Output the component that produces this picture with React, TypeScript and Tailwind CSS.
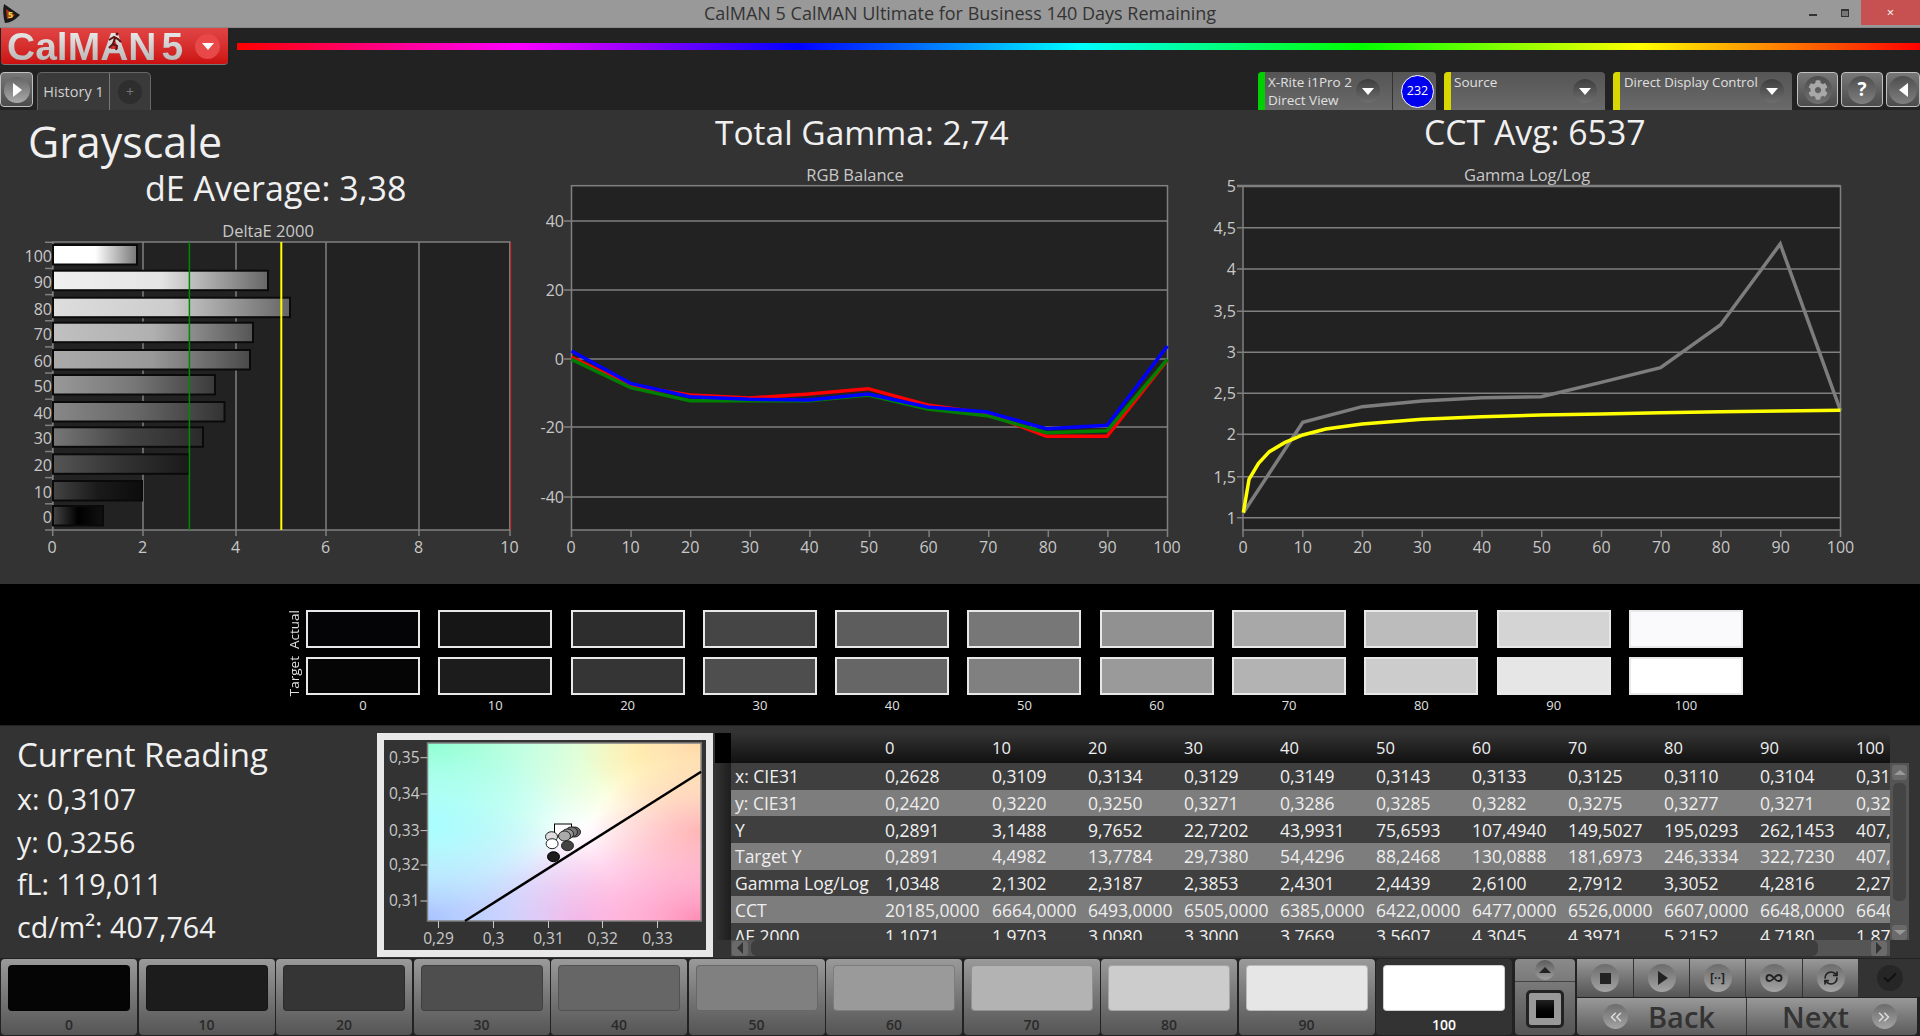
import { ChevronsLeft, ChevronsRight, Check, Infinity as InfinityIcon, RefreshCw } from "lucide-react";
import { FaCog } from "react-icons/fa";

const levels = [0, 10, 20, 30, 40, 50, 60, 70, 80, 90, 100];
const actual = ["#040406", "#161616", "#2e2d2e", "#454545", "#5e5d5d", "#777777", "#919191", "#a8a8a8", "#bcbcbc", "#d4d4d4", "#fafafc"];
const target = ["#050505", "#1c1c1c", "#353535", "#4e4e4e", "#666666", "#808080", "#9a9a9a", "#b3b3b3", "#cccccc", "#e6e6e6", "#ffffff"];

const rows = [
  ["x: CIE31", "0,2628", "0,3109", "0,3134", "0,3129", "0,3149", "0,3143", "0,3133", "0,3125", "0,3110", "0,3104", "0,3107"],
  ["y: CIE31", "0,2420", "0,3220", "0,3250", "0,3271", "0,3286", "0,3285", "0,3282", "0,3275", "0,3277", "0,3271", "0,3256"],
  ["Y", "0,2891", "3,1488", "9,7652", "22,7202", "43,9931", "75,6593", "107,4940", "149,5027", "195,0293", "262,1453", "407,7640"],
  ["Target Y", "0,2891", "4,4982", "13,7784", "29,7380", "54,4296", "88,2468", "130,0888", "181,6973", "246,3334", "322,7230", "407,7640"],
  ["Gamma Log/Log", "1,0348", "2,1302", "2,3187", "2,3853", "2,4301", "2,4439", "2,6100", "2,7912", "3,3052", "4,2816", "2,2790"],
  ["CCT", "20185,0000", "6664,0000", "6493,0000", "6505,0000", "6385,0000", "6422,0000", "6477,0000", "6526,0000", "6607,0000", "6648,0000", "6640,0000"],
  ["ΔE 2000", "1,1071", "1,9703", "3,0080", "3,3000", "3,7669", "3,5607", "4,3045", "4,3971", "5,2152", "4,7180", "1,8760"],
];

// delta bars, top to bottom
const bars = [
  { label: "100", y: 245, end: 137, stops: ["#ffffff", "#ffffff", "#777777"] },
  { label: "90", y: 270.7, end: 268, stops: ["#f0f0f0", "#e4e4e4", "#666666"] },
  { label: "80", y: 297.7, end: 290, stops: ["#dddddd", "#cccccc", "#666666"] },
  { label: "70", y: 322.7, end: 253, stops: ["#c0c0c0", "#b0b0b0", "#555555"] },
  { label: "60", y: 350, end: 250, stops: ["#aaaaaa", "#999999", "#4a4a4a"] },
  { label: "50", y: 375, end: 215, stops: ["#999999", "#777777", "#3a3a3a"] },
  { label: "40", y: 402, end: 224.5, stops: ["#888888", "#666666", "#333333"] },
  { label: "30", y: 427.3, end: 203, stops: ["#777777", "#444444", "#2a2a2a"] },
  { label: "20", y: 454.3, end: 189, stops: ["#555555", "#333333", "#1a1a1a"] },
  { label: "10", y: 481, end: 142, stops: ["#444444", "#1a1a1a", "#0c0c0c"] },
  { label: "0", y: 506, end: 103, stops: ["#444444", "#000000", "#111111"] },
];

const axisText = "#c8c8c8";
const gridLine = "#808080";

const toPoints = (points: number[][], ox: number, sx: number) =>
  points.map(([x, y]) => `${ox + x / sx},${160 + y / 3}`).join(" ");

function DeltaChart() {
  const gridX = [52.7, 143, 236, 326, 419, 510];
  return (
    <svg width={530} height={375} viewBox="0 209 530 375">
      <defs>
        {bars.map((b) => (
          <linearGradient key={b.label} id={`bar${b.label}`} x1="0" x2="1" y1="0" y2="0">
            <stop offset="0" stopColor={b.stops[0]} />
            <stop offset="0.5" stopColor={b.stops[1]} />
            <stop offset="1" stopColor={b.stops[2]} />
          </linearGradient>
        ))}
      </defs>
      <text x={268} y={236.5} textAnchor="middle" fontSize={16.5} fill={axisText}>DeltaE 2000</text>
      <rect x={52.7} y={242} width={457.3} height={288} fill="#222222" stroke={gridLine} strokeWidth={1.5} />
      {gridX.map((x) => (
        <line key={x} x1={x} x2={x} y1={242} y2={536} stroke={gridLine} strokeWidth={1.5} />
      ))}
      {bars.map((b, i) => (
        <g key={b.label}>
          <line x1={45} x2={52.7} y1={242.3 + i * 26.15} y2={242.3 + i * 26.15} stroke={gridLine} strokeWidth={1.5} />
          <rect x={53} y={b.y} width={b.end - 53} height={19.5} fill={`url(#bar${b.label})`} stroke="#0a0a0a" strokeWidth={2} />
          <text x={52} y={b.y + 17} textAnchor="end" fontSize={16} fill={axisText}>{b.label}</text>
        </g>
      ))}
      <line x1={45} x2={52.7} y1={530} y2={530} stroke={gridLine} strokeWidth={1.5} />
      <line x1={189.4} x2={189.4} y1={242} y2={530} stroke="#008a00" strokeWidth={1.5} />
      <line x1={281.3} x2={281.3} y1={242} y2={530} stroke="#ffff00" strokeWidth={2} />
      <line x1={510.7} x2={510.7} y1={242} y2={530} stroke="#c02020" strokeWidth={1} />
      {["0", "2", "4", "6", "8", "10"].map((t, i) => (
        <text key={t} x={gridX[i] - 0.5} y={553} textAnchor="middle" fontSize={16} fill={axisText}>{t}</text>
      ))}
    </svg>
  );
}

function RgbChart() {
  const red = [[97, 592], [233, 677], [370, 705], [507, 714], [644, 702], [781, 686], [918, 735], [1055, 760], [1192, 829], [1332, 829], [1471, 600]];
  const green = [[97, 598], [233, 683], [370, 722], [507, 722], [644, 722], [781, 705], [918, 747], [1055, 767], [1192, 818], [1332, 812], [1471, 598]];
  const blue = [[97, 573], [233, 670], [370, 710], [507, 718], [644, 720], [781, 702], [918, 741], [1055, 756], [1192, 806], [1332, 796], [1471, 558]];
  const hLines: [string, number][] = [["40", 221], ["20", 290], ["0", 359], ["-20", 427], ["-40", 497]];
  return (
    <svg width={670} height={428} viewBox="530 156 670 428">
      <text x={855} y={181} textAnchor="middle" fontSize={16.5} fill={axisText}>RGB Balance</text>
      <rect x={571.5} y={185.7} width={596} height={344.3} fill="#222222" stroke={gridLine} strokeWidth={1.5} />
      {hLines.map(([t, y]) => (
        <g key={t}>
          <line x1={564} x2={1167.5} y1={y} y2={y} stroke={gridLine} strokeWidth={1.5} />
          <text x={564} y={y + 6} textAnchor="end" fontSize={16} fill={axisText}>{t}</text>
        </g>
      ))}
      {levels.map((l, i) => (
        <g key={l}>
          <line x1={571.5 + i * 59.6} x2={571.5 + i * 59.6} y1={530} y2={537} stroke={gridLine} strokeWidth={1.5} />
          <text x={571 + i * 59.6} y={553} textAnchor="middle" fontSize={16} fill={axisText}>{l}</text>
        </g>
      ))}
      <polyline points={toPoints(red, 529.5, 2.306)} fill="none" stroke="#ff0000" strokeWidth={3.5} />
      <polyline points={toPoints(green, 529.5, 2.306)} fill="none" stroke="#008000" strokeWidth={3.5} />
      <polyline points={toPoints(blue, 529.5, 2.306)} fill="none" stroke="#0000ff" strokeWidth={3.5} />
    </svg>
  );
}

function GammaChart() {
  const gray = [[100, 1058], [237, 787], [374, 740], [512, 723], [650, 713], [787, 710], [925, 667], [1062, 623], [1200, 495], [1338, 252], [1477, 752]];
  const yellow = [[100, 1058], [113, 958], [135, 910], [160, 875], [195, 848], [237, 825], [290, 807], [374, 792], [512, 778], [650, 770], [787, 765], [925, 762], [1062, 758], [1200, 755], [1338, 753], [1477, 751]];
  const hLines: [string, number][] = [["5", 186], ["4,5", 227.7], ["4", 269], ["3,5", 311.3], ["3", 352.3], ["2,5", 393.3], ["2", 434.3], ["1,5", 476.7], ["1", 517.7]];
  return (
    <svg width={720} height={428} viewBox="1200 156 720 428">
      <text x={1527} y={181} textAnchor="middle" fontSize={16.5} fill={axisText}>Gamma Log/Log</text>
      <rect x={1243} y={186} width={597.5} height={344} fill="#222222" stroke={gridLine} strokeWidth={1.5} />
      {hLines.map(([t, y]) => (
        <g key={t}>
          <line x1={1237} x2={1840.5} y1={y} y2={y} stroke={gridLine} strokeWidth={t === "5" ? 2.5 : 1.5} />
          <text x={1236} y={y + 6} textAnchor="end" fontSize={16} fill={axisText}>{t}</text>
        </g>
      ))}
      {levels.map((l, i) => (
        <g key={l}>
          <line x1={1243 + i * 59.75} x2={1243 + i * 59.75} y1={530} y2={537} stroke={gridLine} strokeWidth={1.5} />
          <text x={1243 + i * 59.75} y={553} textAnchor="middle" fontSize={16} fill={axisText}>{l}</text>
        </g>
      ))}
      <polyline points={toPoints(gray, 1200, 2.306)} fill="none" stroke="#7d7d7d" strokeWidth={3.5} />
      <polyline points={toPoints(yellow, 1200, 2.306)} fill="none" stroke="#ffff00" strokeWidth={3.5} />
    </svg>
  );
}

function CieChart() {
  const yTicks: [string, number][] = [["0,35", 757.7], ["0,34", 794], ["0,33", 830.6], ["0,32", 865], ["0,31", 901]];
  const xTicks: [string, number][] = [["0,29", 439], ["0,3", 494], ["0,31", 549], ["0,32", 603], ["0,33", 658]];
  return (
    <svg width={322} height={209} viewBox="384.5 740 322 209">
      <defs>
        <radialGradient id="cieTL" cx="0" cy="0" r="0.75">
          <stop offset="0" stopColor="#8cffcc" />
          <stop offset="1" stopColor="#8cffcc" stopOpacity="0" />
        </radialGradient>
        <radialGradient id="cieTR" cx="1" cy="0" r="0.45">
          <stop offset="0" stopColor="#ffd8a8" />
          <stop offset="1" stopColor="#ffd8a8" stopOpacity="0" />
        </radialGradient>
        <radialGradient id="cieY" cx="0.78" cy="0.05" r="0.45">
          <stop offset="0" stopColor="#ffffb8" />
          <stop offset="1" stopColor="#ffffb8" stopOpacity="0" />
        </radialGradient>
        <radialGradient id="cieBL" cx="0" cy="1" r="0.7">
          <stop offset="0" stopColor="#a8c4ff" />
          <stop offset="1" stopColor="#a8c4ff" stopOpacity="0" />
        </radialGradient>
        <radialGradient id="cieBR" cx="1" cy="1" r="0.7">
          <stop offset="0" stopColor="#ff8cb4" />
          <stop offset="1" stopColor="#ffb0e0" stopOpacity="0" />
        </radialGradient>
        <radialGradient id="cieB" cx="0.55" cy="1" r="0.45">
          <stop offset="0" stopColor="#ffc4f4" />
          <stop offset="1" stopColor="#ffc4f4" stopOpacity="0" />
        </radialGradient>
        <radialGradient id="cieR" cx="1" cy="0.5" r="0.4">
          <stop offset="0" stopColor="#ffbca8" />
          <stop offset="1" stopColor="#ffbca8" stopOpacity="0" />
        </radialGradient>
        <radialGradient id="cieL" cx="0" cy="0.45" r="0.5">
          <stop offset="0" stopColor="#a8ffff" />
          <stop offset="1" stopColor="#a8ffff" stopOpacity="0" />
        </radialGradient>
      </defs>
      <rect x={428} y={743} width={273.6} height={178} fill="#ffffff" />
      {["cieY", "cieTL", "cieTR", "cieR", "cieB", "cieBL", "cieBR", "cieL"].map((id) => (
        <rect key={id} x={428} y={743} width={273.6} height={178} fill={`url(#${id})`} />
      ))}
      <rect x={428} y={743} width={273.6} height={178} fill="none" stroke="#808080" strokeWidth={1.5} />
      {yTicks.map(([t, y]) => (
        <g key={t}>
          <line x1={421} x2={428} y1={y} y2={y} stroke="#c8c8c8" />
          <text x={420} y={y + 5} textAnchor="end" fontSize={15.5} fill={axisText}>{t}</text>
        </g>
      ))}
      {xTicks.map(([t, x]) => (
        <g key={t}>
          <line x1={x} x2={x} y1={921} y2={928} stroke="#c8c8c8" />
          <text x={x} y={944} textAnchor="middle" fontSize={15.5} fill={axisText}>{t}</text>
        </g>
      ))}
      <line x1={465.5} y1={921} x2={701.6} y2={771.7} stroke="#000000" strokeWidth={2.5} />
      <rect x={555} y={824} width={17} height={12} fill="#ffffff" stroke="#000000" strokeWidth={1} />
      <ellipse cx={575} cy={832} rx={6} ry={5} fill="#666666" stroke="#222222" />
      <ellipse cx={572} cy={832} rx={6} ry={5} fill="#777777" stroke="#222222" />
      <ellipse cx={568} cy={834} rx={6} ry={5} fill="#999999" stroke="#222222" />
      <ellipse cx={565} cy={836} rx={6} ry={5} fill="#aaaaaa" stroke="#222222" />
      <ellipse cx={568} cy={845.7} rx={6} ry={5} fill="#444444" stroke="#222222" />
      <ellipse cx={552} cy={836.7} rx={6} ry={5} fill="#dddddd" stroke="#222222" />
      <ellipse cx={552.6} cy={843.7} rx={6} ry={5} fill="#ffffff" stroke="#222222" />
      <ellipse cx={554} cy={856.7} rx={6} ry={5} fill="#1c1c1c" stroke="#000000" />
    </svg>
  );
}

function RoundIcon({
  size = "w-[24px] h-[24px]",
  tone = "from-[#5c5c5c] to-[#a0a0a0]",
  children,
}: {
  size?: string;
  tone?: string;
  children: React.ReactNode;
}) {
  return (
    <div className={`${size} ${tone} rounded-full bg-gradient-to-b flex items-center justify-center shrink-0`}>
      {children}
    </div>
  );
}

function DownArrow() {
  return <div className="w-0 h-0 border-l-[6px] border-r-[6px] border-t-[7px] border-l-transparent border-r-transparent border-t-white" />;
}

function PillArrow() {
  return (
    <RoundIcon tone="from-[#3e3e3e] to-[#6e6e6e]">
      <DownArrow />
    </RoundIcon>
  );
}

function SourcePill({ width, strip, children }: { width: string; strip: string; children: React.ReactNode }) {
  return (
    <div className={`${width} h-[38px] flex rounded-t-[4px] overflow-hidden bg-gradient-to-b from-[#555555] to-[#6a6a6a] shrink-0`}>
      <div className={`w-[7px] ${strip}`} />
      {children}
    </div>
  );
}

function ToolButton({ width, children }: { width: string; children: React.ReactNode }) {
  return (
    <div className={`${width} h-[35px] rounded-[4px] border border-[#c0c0c0] bg-gradient-to-b from-[#777777] to-[#4c4c4c] flex items-center justify-center shrink-0`}>
      {children}
    </div>
  );
}

function TopButton({ width, children }: { width: string; children: React.ReactNode }) {
  return (
    <div className={`${width} h-[38px] border-r border-[#333333] bg-gradient-to-b from-[#999999] to-[#555555] flex items-center justify-center shrink-0`}>
      <RoundIcon size="w-[28px] h-[28px]" tone="from-[#6c6c6c] to-[#a4a4a4]">{children}</RoundIcon>
    </div>
  );
}

const logoText =
  "font-['Liberation_Sans',sans-serif] font-bold text-[39px] leading-none bg-gradient-to-b from-[#f0f0f0] to-[#b0b0b0] bg-clip-text text-transparent";

export default function App() {
  return (
    <div className="w-[1920px] h-[1036px] overflow-hidden flex flex-col bg-[#222222] font-['Open_Sans',sans-serif]">
      {/* title bar */}
      <div className="relative h-[28px] bg-[#999999] border-b border-[#888888] flex items-center justify-center shrink-0">
        <svg className="absolute left-[2px] top-[3px]" width={19} height={21} viewBox="0 0 19 21">
          <path d="M2 1 L18 12 Q10 20 3 20 Q0 10 2 1 Z" fill="#1a1a1a" />
          <path d="M4 6 L13 12 Q9 16 5 16 Z" fill="#b03018" />
          <text x={6} y={15} fontSize={9} fontWeight={700} fill="#d8e040">5</text>
        </svg>
        <span className="text-[18px] text-[#333333] pb-[1px]">CalMAN 5 CalMAN Ultimate for Business 140 Days Remaining</span>
        <div className="absolute right-0 top-0 flex items-center h-[25px]">
          <div className="w-[8px] h-[2px] bg-[#333333] mr-[24px] mt-[4px]" />
          <div className="w-[8px] h-[8px] border border-[#333333] border-t-[2px] mr-[12px] bg-[#777777]" />
          <div className="w-[59px] h-[25px] bg-[#c75050] text-white text-[13px] flex items-center justify-center">×</div>
        </div>
      </div>

      {/* logo and rainbow */}
      <div className="h-[44px] flex shrink-0">
        <div className="relative ml-[1px] w-[227px] h-[37px] rounded-b-[4px] border-b border-[#777777] bg-gradient-to-b from-[#e04444] to-[#cc0f0f] flex items-center pl-[6px] shrink-0">
          <span className={logoText}>CalMAN</span>
          <span className={`ml-[5px] ${logoText}`}>5</span>
          <svg className="absolute left-[104px] top-[3px]" width={20} height={20} viewBox="0 0 20 20" fill="none" stroke="#5a1414" strokeWidth={2}>
            <circle cx={12} cy={3} r={1.5} fill="#5a1414" stroke="none" />
            <path d="M4 9 L9 6 L13 8 L16 11 M10 7 L8 13 L12 15 L11 19 M8 13 L4 17" />
          </svg>
          <div className="ml-[12px] w-[25px] h-[25px] rounded-full bg-[#e84848] flex items-center justify-center">
            <DownArrow />
          </div>
        </div>
        <div className="flex-1 ml-[9px] mt-[15px] h-[7px] bg-[linear-gradient(to_right,#ff0000,#ff00ff,#0000ff,#00ffff,#00ff00,#ffff00,#ff0000)]" />
      </div>

      {/* tab row */}
      <div className="h-[38px] flex items-start shrink-0">
        <ToolButton width="w-[33px]">
          <RoundIcon size="w-[26px] h-[26px]" tone="from-[#666666] to-[#aaaaaa]">
            <div className="ml-[2px] w-0 h-0 border-t-[7px] border-b-[7px] border-l-[9px] border-t-transparent border-b-transparent border-l-white" />
          </RoundIcon>
        </ToolButton>
        <div className="ml-[4px] w-[114px] h-[38px] flex rounded-t-[5px] border-t border-l border-r border-[#666666] bg-[#3a3a3a]">
          <div className="w-[72px] border-r border-[#777777] flex items-center justify-center text-[14.5px] text-[#d0d0d0]">History 1</div>
          <div className="flex-1 flex items-center justify-center">
            <div className="w-[24px] h-[24px] rounded-full bg-[#2e2e2e] text-[#777777] text-[14px] flex items-center justify-center">+</div>
          </div>
        </div>
        <div className="flex-1" />
        <SourcePill width="w-[178px]" strip="bg-[#00d000]">
          <div className="w-[91px] pl-[3px] text-[13.5px] leading-[18px] text-[#e0e0e0] pt-[1px] whitespace-nowrap">
            <div>X-Rite i1Pro 2</div>
            <div>Direct View</div>
          </div>
          <div className="w-[26px] flex items-center"><PillArrow /></div>
          <div className="ml-[10px] pl-[6px] border-l border-[#333333] flex-1 flex items-center justify-center">
            <div className="w-[33px] h-[33px] rounded-full bg-[#0000ee] border border-white text-white text-[12.5px] flex items-center justify-center">232</div>
          </div>
        </SourcePill>
        <div className="w-[8px]" />
        <SourcePill width="w-[161px]" strip="bg-[#d8d800]">
          <div className="flex-1 pl-[3px] pt-[1px] text-[13.5px] leading-[18px] text-[#e0e0e0]">Source</div>
          <div className="w-[32px] flex items-center"><PillArrow /></div>
        </SourcePill>
        <div className="w-[8px]" />
        <SourcePill width="w-[179px]" strip="bg-[#d8d800]">
          <div className="flex-1 pl-[4px] pt-[1px] text-[13.2px] leading-[18px] text-[#e0e0e0] whitespace-nowrap">Direct Display Control</div>
          <div className="w-[32px] flex items-center"><PillArrow /></div>
        </SourcePill>
        <div className="w-[5px]" />
        <ToolButton width="w-[41px]">
          <RoundIcon size="w-[28px] h-[28px]" tone="from-[#4e4e4e] to-[#707070]"><FaCog size={20} color="#a8a8a8" /></RoundIcon>
        </ToolButton>
        <div className="w-[3px]" />
        <ToolButton width="w-[42px]">
          <RoundIcon size="w-[28px] h-[28px]" tone="from-[#4e4e4e] to-[#808080]"><span className="text-white font-bold text-[19px] leading-none">?</span></RoundIcon>
        </ToolButton>
        <div className="w-[3px]" />
        <ToolButton width="w-[34px]">
          <RoundIcon size="w-[28px] h-[28px]" tone="from-[#4e4e4e] to-[#808080]">
            <div className="w-0 h-0 border-t-[7px] border-b-[7px] border-r-[9px] border-t-transparent border-b-transparent border-r-white" />
          </RoundIcon>
        </ToolButton>
      </div>

      {/* charts */}
      <div className="h-[474px] bg-[#333333] flex shrink-0 text-[#f0f0f0]">
        <div className="w-[530px] shrink-0">
          <div className="pl-[28px] pt-[8px] h-[57px] text-[43px] leading-[48px]">Grayscale</div>
          <div className="pl-[145px] h-[42px] text-[34px] leading-[42px]">dE Average: 3,38</div>
          <DeltaChart />
        </div>
        <div className="w-[670px] shrink-0">
          <div className="h-[46px] pl-[185px] text-[33.5px] leading-[44px] whitespace-nowrap">Total Gamma: 2,74</div>
          <RgbChart />
        </div>
        <div className="w-[720px] shrink-0">
          <div className="h-[46px] pl-[224px] text-[33.8px] leading-[44px] whitespace-nowrap">CCT Avg: 6537</div>
          <GammaChart />
        </div>
      </div>

      {/* swatches */}
      <div className="h-[141px] bg-black flex shrink-0 pl-[284px] pt-[26px]">
        <div className="w-[22px] flex flex-col text-[13.5px] text-[#e0e0e0]">
          <div className="h-[38px] flex justify-center items-center"><span className="[writing-mode:vertical-rl] rotate-180 leading-none">Actual</span></div>
          <div className="h-[38px] mt-[9px] flex justify-center items-center"><span className="[writing-mode:vertical-rl] rotate-180 leading-none">Target</span></div>
        </div>
        <div className="flex gap-[18.3px]">
          {levels.map((l, i) => (
            <div key={l} className="w-[114px] flex flex-col">
              <div className="h-[38px] border-2 border-[#e8e8e8]" style={{ backgroundColor: actual[i] }} />
              <div className="h-[38px] mt-[9px] border-2 border-[#e8e8e8]" style={{ backgroundColor: target[i] }} />
              <div className="mt-[1px] text-center text-[13px] leading-[18px] text-[#e0e0e0]">{l}</div>
            </div>
          ))}
        </div>
      </div>

      {/* readings */}
      <div className="h-[233px] bg-[#333333] border-t border-[#222222] flex shrink-0 text-[#f0f0f0]">
        <div className="w-[377px] pl-[17px] pt-[7px] shrink-0">
          <div className="text-[33px] leading-[44px]">Current Reading</div>
          <div className="text-[28.6px] leading-[42.6px] mt-[1px]">x: 0,3107</div>
          <div className="text-[28.6px] leading-[42.6px]">y: 0,3256</div>
          <div className="text-[28.6px] leading-[42.6px]">fL: 119,011</div>
          <div className="text-[28.6px] leading-[42.6px]">cd/m²: 407,764</div>
        </div>
        <div className="w-[336px] h-[224px] mt-[7px] border-[7px] border-[#e8e8e8] shrink-0 bg-[#333333]">
          <CieChart />
        </div>
        <div className="w-[2px] shrink-0" />
        <div className="flex-1 pt-[7px] pr-[11px] min-w-0">
          <div className="flex">
            <div className="w-[16px] shrink-0 flex flex-col">
              <div className="h-[30px] bg-black" />
              <div className="flex-1 bg-gradient-to-r from-[#333333] to-[#1e1e1e]" />
            </div>
            <div className="w-[1159px] h-[207px] overflow-hidden shrink-0">
              <div className="h-[30px] pt-[1px] flex items-center bg-gradient-to-b from-[#333333] to-[#111111] text-[16.5px] text-[#f0f0f0]">
                <div className="w-[154px] shrink-0" />
                <div className="w-[107px] shrink-0">0</div>
                {levels.slice(1).map((l) => (
                  <div key={l} className="w-[96px] shrink-0">{l}</div>
                ))}
              </div>
              {rows.map((row, i) => (
                <div key={row[0]} className={`h-[26.7px] flex items-center text-[17.5px] whitespace-nowrap ${i % 2 ? "bg-[#7d7d7d] text-[#eeeeee]" : "bg-[#3f3f3f] text-[#f0f0f0]"}`}>
                  <div className="w-[154px] pl-[4px] shrink-0">{row[0]}</div>
                  <div className="w-[107px] shrink-0">{row[1]}</div>
                  {row.slice(2).map((v, j) => (
                    <div key={j} className="w-[96px] shrink-0">{v}</div>
                  ))}
                </div>
              ))}
            </div>
            <div className="w-[19px] shrink-0 flex flex-col">
              <div className="h-[30px] bg-[#333333]" />
              <div className="flex-1 bg-[#555555] flex flex-col items-center pt-[2px]">
                <div className="w-[15px] h-[15px] rounded-[3px] bg-[#6a6a6a] flex items-center justify-center">
                  <div className="w-0 h-0 border-l-[6px] border-r-[6px] border-b-[5px] border-l-transparent border-r-transparent border-b-[#9a9a9a]" />
                </div>
                <div className="w-[13px] h-[118px] mt-[3px] rounded-[5px] bg-[#444444]" />
                <div className="w-[15px] h-[15px] mt-[24px] rounded-[3px] bg-[#6a6a6a] flex items-center justify-center">
                  <div className="w-0 h-0 border-l-[6px] border-r-[6px] border-t-[5px] border-l-transparent border-r-transparent border-t-[#9a9a9a]" />
                </div>
              </div>
            </div>
          </div>
          <div className="ml-[16px] w-[1159px] h-[16px] bg-[#555555] flex items-center">
            <div className="ml-[1px] w-[16px] h-[15px] rounded-[3px] bg-[#6a6a6a] flex items-center justify-center">
              <div className="w-0 h-0 border-t-[6px] border-b-[6px] border-r-[6px] border-t-transparent border-b-transparent border-r-[#333333]" />
            </div>
            <div className="ml-[3px] w-[1067px] h-[16px] rounded-[6px] bg-[#3e3e3e]" />
            <div className="ml-[53px] w-[16px] h-[15px] rounded-[3px] bg-[#6a6a6a] flex items-center justify-center">
              <div className="w-0 h-0 border-t-[6px] border-b-[6px] border-l-[6px] border-t-transparent border-b-transparent border-l-[#333333]" />
            </div>
          </div>
        </div>
      </div>

      {/* bottom strip */}
      <div className="flex-1 flex pl-[1px] pt-[1px] min-h-0">
        <div className="flex gap-[1.5px]">
          {levels.map((l, i) => (
            <div
              key={l}
              className={`w-[136px] h-[76px] rounded-[4px] flex flex-col ${l === 100 ? "bg-[#333333]" : "bg-gradient-to-b from-[#9a9a9a] to-[#555555]"}`}
            >
              <div className="mx-[7px] mt-[6px] h-[46px] rounded-[4px] border border-[#00000030]" style={{ backgroundColor: target[i] }} />
              <div className={`flex-1 pt-[2px] flex items-center justify-center text-[14px] font-semibold ${l === 100 ? "text-white" : "text-[#2a2a2a]"}`}>{l}</div>
            </div>
          ))}
        </div>
        <div className="ml-[3px] w-[60px] h-[76px] rounded-[4px] flex flex-col bg-gradient-to-b from-[#8a8a8a] to-[#555555] shrink-0">
          <div className="h-[23px] border-b border-[#444444] flex items-center justify-center">
            <RoundIcon size="w-[20px] h-[20px]">
              <div className="w-0 h-0 border-l-[6px] border-r-[6px] border-b-[6px] border-l-transparent border-r-transparent border-b-[#222222]" />
            </RoundIcon>
          </div>
          <div className="flex-1 flex items-center justify-center">
            <div className="w-[38px] h-[38px] rounded-[5px] border-[3px] border-[#222222] bg-[#999999] flex items-center justify-center">
              <div className="w-[18px] h-[18px] bg-gradient-to-b from-[#222222] to-black" />
            </div>
          </div>
        </div>
        <div className="ml-[2px] flex-1 flex flex-col min-w-0">
          <div className="flex h-[38px]">
            <TopButton width="w-[57px]"><div className="w-[11px] h-[11px] bg-[#222222]" /></TopButton>
            <TopButton width="w-[56px]"><div className="ml-[2px] w-0 h-0 border-t-[7px] border-b-[7px] border-l-[10px] border-t-transparent border-b-transparent border-l-[#222222]" /></TopButton>
            <TopButton width="w-[56px]"><span className="text-[12px] font-bold text-[#222222] leading-none">[··]</span></TopButton>
            <TopButton width="w-[57px]"><InfinityIcon size={18} strokeWidth={2.5} color="#222222" /></TopButton>
            <TopButton width="w-[56px]"><RefreshCw size={16} strokeWidth={2.5} color="#222222" /></TopButton>
            <div className="flex-1 bg-[#333333] flex items-center justify-center">
              <div className="w-[26px] h-[26px] rounded-full bg-[#262626] flex items-center justify-center">
                <Check size={16} strokeWidth={3} color="#111111" />
              </div>
            </div>
          </div>
          <div className="flex h-[37px] mt-[1px]">
            <div className="w-[170px] border-r border-[#333333] rounded-bl-[4px] bg-gradient-to-b from-[#999999] to-[#5c5c5c] flex items-center pl-[26px] shrink-0">
              <RoundIcon size="w-[25px] h-[25px]" tone="from-[#6c6c6c] to-[#a4a4a4]"><ChevronsLeft size={18} color="#dddddd" /></RoundIcon>
              <span className="ml-[20px] text-[29px] font-semibold leading-none text-[#333333]">Back</span>
            </div>
            <div className="w-[170px] rounded-br-[4px] bg-gradient-to-b from-[#999999] to-[#5c5c5c] flex items-center pl-[35px] shrink-0">
              <span className="text-[29px] font-semibold leading-none text-[#333333]">Next</span>
              <div className="ml-[23px]">
                <RoundIcon size="w-[25px] h-[25px]" tone="from-[#6c6c6c] to-[#a4a4a4]"><ChevronsRight size={18} color="#dddddd" /></RoundIcon>
              </div>
            </div>
          </div>
        </div>
      </div>
    </div>
  );
}
